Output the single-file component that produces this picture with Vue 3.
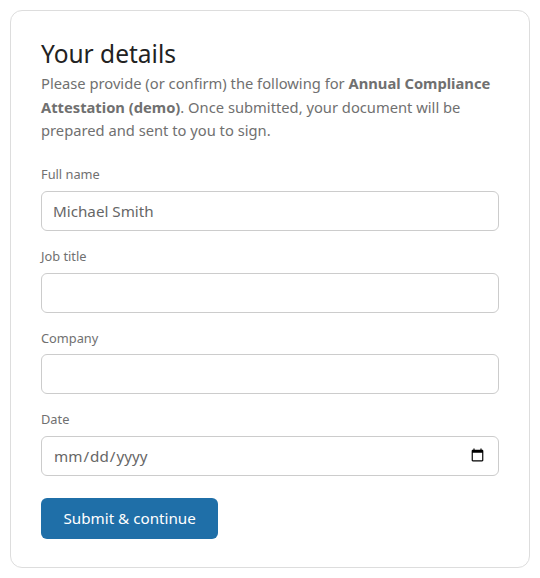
<script setup>
import { ref } from 'vue'

const fullName = ref('Michael Smith')
const jobTitle = ref('')
const company = ref('')
const date = ref('')
</script>

<template>
  <div class="page">
    <form class="card" @submit.prevent>
      <h2>Your details</h2>
      <p class="intro">
        Please provide (or confirm) the following for <strong>Annual Compliance Attestation (demo)</strong>. Once submitted, your document will be prepared and sent to you to sign.
      </p>

      <label class="field">
        <span>Full name</span>
        <input v-model="fullName" type="text" />
      </label>
      <label class="field">
        <span>Job title</span>
        <input v-model="jobTitle" type="text" />
      </label>
      <label class="field">
        <span>Company</span>
        <input v-model="company" type="text" />
      </label>
      <label class="field">
        <span>Date</span>
        <input v-model="date" type="date" />
      </label>

      <button type="submit">Submit &amp; continue</button>
    </form>
  </div>
</template>

<style>
body {
  background: #fff;
}
</style>

<style scoped>
.page {
  padding: 10px;
  font-family: "Noto Sans", sans-serif;
}

.card {
  box-sizing: border-box;
  height: 558px;
  padding: 27px 30px;
  background: #fff;
  border: 1px solid #ddd;
  border-radius: 12px;
}

h2 {
  margin: 0 0 2.4px;
  font-size: 24.5px;
  font-weight: 400;
  line-height: 32px;
  color: #222;
}

.intro {
  margin: 0 0 22.3px;
  font-size: 14.72px;
  line-height: 23.5px;
  color: #707070;
}

.field {
  display: block;
  margin-bottom: 15.87px;
}

.field span {
  display: block;
  margin-bottom: 7.8px;
  font-size: 12.8px;
  line-height: 18px;
  color: #707070;
}

input {
  display: block;
  box-sizing: border-box;
  width: 100%;
  height: 40px;
  padding: 0 11px;
  font-family: inherit;
  font-size: 15.2px;
  color: #666;
  background: #fff;
  border: 1px solid #ccc;
  border-radius: 6px;
}

button {
  display: block;
  height: 41px;
  margin-top: 22px;
  padding: 0 22.5px;
  font-family: inherit;
  font-size: 15.2px;
  color: #fff;
  background: #1f6fa8;
  border: none;
  border-radius: 6px;
  cursor: pointer;
}
</style>
